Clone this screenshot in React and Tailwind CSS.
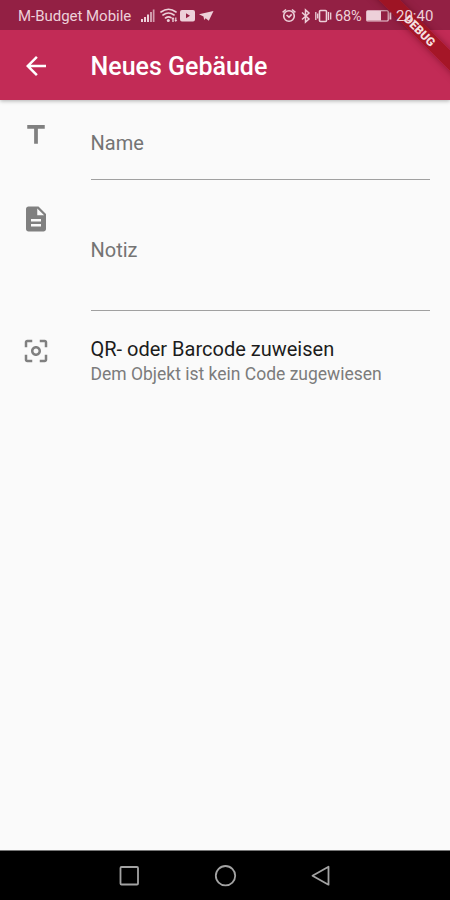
import React from "react";

const icons = {
  back: "M20 11H7.83l5.59-5.59L12 4l-8 8 8 8 1.41-1.41L7.83 13H20v-2z",
  title: "M5 4v3h5.5v12h3V7H19V4z",
  note: "M14 2H6c-1.1 0-1.99.9-1.99 2L4 20c0 1.1.89 2 1.99 2H18c1.1 0 2-.9 2-2V8l-6-6zm2 16H8v-2h8v2zm0-4H8v-2h8v2zm-3-5V3.5L18.5 9H13z",
  scan: "M5 15H3v4c0 1.1.9 2 2 2h4v-2H5v-4zM5 5h4V3H5c-1.1 0-2 .9-2 2v4h2V5zm14-2h-4v2h4v4h2V5c0-1.1-.9-2-2-2zm0 16h-4v2h4c1.1 0 2-.9 2-2v-4h-2v4zM12 8c-2.21 0-4 1.79-4 4s1.79 4 4 4 4-1.79 4-4-1.79-4-4-4zm0 6c-1.1 0-2-.9-2-2s.9-2 2-2 2 .9 2 2-.9 2-2 2z",
};

function Icon({ name, className = "" }) {
  return (
    <svg viewBox="0 0 24 24" fill="currentColor" className={`w-[30px] h-[30px] shrink-0 ${className}`}>
      <path d={icons[name]} />
    </svg>
  );
}

function StatusBar() {
  return (
    <div className="h-[30px] pt-[2px] bg-[#932044] text-[#edd0d9] flex items-center relative">
      <span className="ml-[18px] w-[122px] text-[15px] tracking-[-0.03px] whitespace-nowrap">M-Budget Mobile</span>
      <svg width="76" height="18" viewBox="140 7 76 18" fill="currentColor">
        <path d="M141 19h2v3h-2zM144 17h2v5h-2zM147 14.500h2v7.500h-2z" />
        <path d="M150 12h2v10h-2zM152.800 9.500h1.700V22h-1.700z" opacity=".7" />
        <g fill="none" stroke="currentColor" strokeWidth="1.6" strokeLinecap="round">
          <path d="M161 12q7.500-5.500 15 0M163 15q5.500-4 11 0M165.500 18q3-2.200 5.500-.3" />
        </g>
        <circle cx="168.300" cy="20.400" r="1.500" />
        <path d="M173 17l1.700 2.200h-1V22h-1.400v-2.800h-1zM175.800 22l-1.500-2h.9v-2.500h1.200V20h.9z" />
        <path fillRule="evenodd" d="M182 10h11q2 0 2 2v7.500q0 2-2 2h-11q-2 0-2-2V12q0-2 2-2zm4 3.300v5l4-2.500z" />
        <path d="M199 14.300L213.500 11L208.800 20.700L205.600 18.200L204.200 20L203.500 16.600z" />
      </svg>
      <svg width="51" height="18" viewBox="282 7 51 18" fill="none" stroke="currentColor" strokeWidth="1.600" className="ml-[66px]">
        <circle cx="289" cy="16" r="5.300" />
        <path d="M286.500 15l2.500 2.200 2.700-2.800M282.600 12.300l3.400-2.800M292 9.500l3.400 2.800" />
        <path d="M302 12.500l7 6.500-3.500 3V10l3.500 3-7 6.500" strokeWidth="1.500" />
        <rect x="319.500" y="10.500" width="7" height="11" rx="1" />
        <path d="M315.800 12v8M317.700 13.500v5M328.500 12v8M330.700 12.500v7" strokeWidth="1.300" />
      </svg>
      <span className="ml-[2px] mt-px w-[31px] text-[14.500px] tracking-[-0.2px]">68%</span>
      <svg width="26" height="12" viewBox="366 10 26 12" className="relative">
        <rect x="366.700" y="10.700" width="21.500" height="10.300" rx="1" fill="none" stroke="currentColor" strokeWidth="1.100" />
        <path d="M367 11h14v9.500h-14zM389.500 12.500h1.800v7h-1.800z" fill="currentColor" />
      </svg>
      <span className="relative z-20 ml-[4px] text-[15px]">20:40</span>
    </div>
  );
}

function DebugBanner() {
  return (
    <div className="absolute top-0 right-0 w-[90px] h-[90px] overflow-hidden z-10">
      <div className="absolute left-[-5px] top-[22.500px] w-[130px] h-[15px] rotate-45 bg-[#a0131f]/85 shadow-[0_0_7px_rgba(90,0,20,0.55)] flex items-center justify-center">
        <span className="text-[12px] leading-none font-black text-[#f5dfdf]">DEBUG</span>
      </div>
    </div>
  );
}

function Field({ icon, label, className, inputClass }) {
  return (
    <div className={`flex pl-[20.500px] pr-5 ${className}`}>
      <Icon name={icon} className="text-[#808080]" />
      <div className={`ml-[40px] flex-1 border-b border-[#a0a0a0] text-[20px] leading-6 text-[#747474] ${inputClass}`}>
        {label}
      </div>
    </div>
  );
}

function NavBar() {
  return (
    <div className="h-[50px] bg-black border-t border-[#777]">
      <svg width="450" height="49" viewBox="0 0 450 49" fill="none" stroke="#a3a3a3" strokeWidth="1.800">
        <rect x="120.500" y="16" width="17.500" height="17.500" rx="1" />
        <circle cx="225.500" cy="24.700" r="9.700" />
        <path d="M312.500 24.700L328.500 15.700V33.700z" strokeLinejoin="round" />
      </svg>
    </div>
  );
}

export default function App() {
  return (
    <div className="w-[450px] h-[900px] relative overflow-hidden flex flex-col bg-[#fafafa] font-['Roboto',sans-serif]">
      <StatusBar />
      <DebugBanner />
      <header className="h-[70px] shrink-0 bg-[#c22b56] text-white flex items-center pl-[21px] shadow-[0_1px_4px_rgba(0,0,0,0.3)]">
        <Icon name="back" className="mt-px" />
        <h1 className="ml-[39.500px] mt-[4px] text-[25px] leading-8 font-medium">Neues Gebäude</h1>
      </header>

      <main className="flex-1">
        <Field icon="title" label="Name" className="pt-5" inputClass="h-[60px] pt-[11px]" />
        <Field icon="note" label="Notiz" className="pt-6" inputClass="h-[107px] pt-[34px]" />
        <div className="flex pl-[20.500px] pt-[25px]">
          <Icon name="scan" className="text-[#808080]" />
          <div className="ml-[40px] whitespace-nowrap">
            <p className="text-[20px] leading-[26px] text-[#1c1c1c]">QR- oder Barcode zuweisen</p>
            <p className="text-[17.500px] leading-6 text-[#7c7c7c]">Dem Objekt ist kein Code zugewiesen</p>
          </div>
        </div>
      </main>
      <NavBar />
    </div>
  );
}
